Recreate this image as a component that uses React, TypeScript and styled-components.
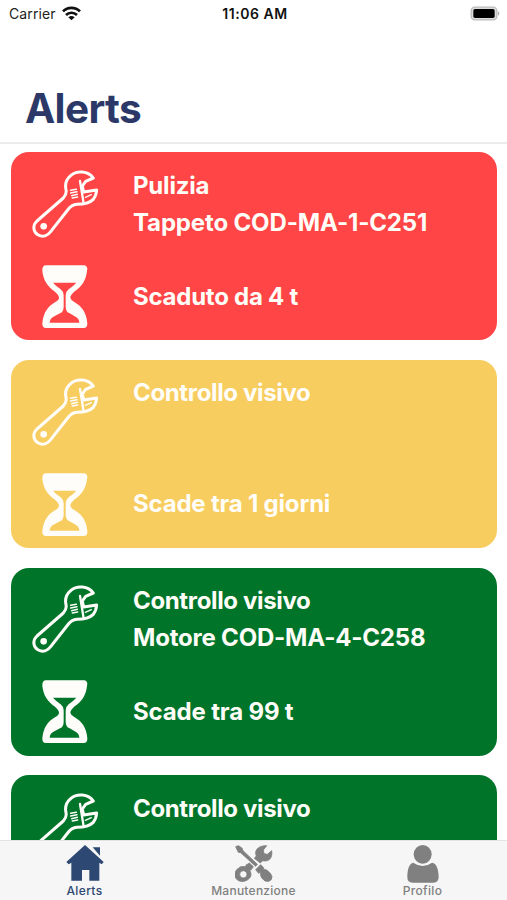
import React from "react";
import styled, { createGlobalStyle } from "styled-components";

const GlobalStyle = createGlobalStyle`
  * { box-sizing: border-box; }
  body { margin: 0; background: #fff; font-family: Inter, "Liberation Sans", sans-serif; }
`;

const Screen = styled.div`
  width: 507px;
  height: 900px;
  display: flex;
  flex-direction: column;
  overflow: hidden;
  background: #fff;
`;

const StatusBar = styled.div`
  height: 27px;
  flex: none;
  display: grid;
  grid-template-columns: 1fr auto 1fr;
  align-items: center;
  padding: 0 6px 0 9px;
  font-size: 14px;
  color: #222;
`;

const Carrier = styled.div`
  display: flex;
  align-items: center;
  gap: 6px;
  letter-spacing: 0.1px;
`;

const Clock = styled.div`
  font-weight: 600;
  letter-spacing: 0.55px;
  color: #111;
`;

const BatterySlot = styled.div`
  display: flex;
  justify-content: flex-end;
`;

const Header = styled.header`
  height: 117px;
  flex: none;
  display: flex;
  align-items: flex-end;
  padding: 0 25px 9px;
  border-bottom: 2px solid #ebebeb;
`;

const Title = styled.h1`
  margin: 0;
  font-size: 40.5px;
  line-height: 48px;
  font-weight: 700;
  letter-spacing: -0.65px;
  color: #2c3968;
`;

const List = styled.main`
  flex: 1;
  min-height: 0;
  overflow: hidden;
  display: flex;
  flex-direction: column;
  gap: 19.7px;
  padding: 8.4px 10px 0 11px;
`;

const Card = styled.article<{ $color: string }>`
  height: 188px;
  flex: none;
  border-radius: 18px;
  background: ${(p) => p.$color};
  color: #fffdf8;
  padding: 14.4px 0 0 20px;
  display: grid;
  grid-template-columns: 102px 1fr;
  grid-template-rows: 97px 64px;
`;

const IconSlot = styled.div<{ $inset: number; $top: number }>`
  padding: ${(p) => p.$top}px 0 0 ${(p) => p.$inset}px;
  svg { display: block; }
`;

const Details = styled.div<{ $top: number }>`
  padding-top: ${(p) => p.$top}px;
  font-size: 24px;
  line-height: 37px;
  font-weight: 650;
  white-space: nowrap;
`;

const Line = styled.div<{ $tracking: number }>`
  letter-spacing: ${(p) => p.$tracking}px;
`;

const TabBar = styled.nav`
  height: 60px;
  flex: none;
  display: grid;
  grid-template-columns: repeat(3, 1fr);
  border-top: 1px solid #e4e4e4;
  background: #f6f6f6;
`;

const Tab = styled.div<{ $active?: boolean }>`
  display: grid;
  grid-template-rows: 38px 14px;
  justify-items: center;
  align-content: start;
  padding-top: 4px;
  color: ${(p) => (p.$active ? "#2d4872" : "#808080")};
  svg { display: block; }
`;

const TabLabel = styled.span<{ $tracking: number }>`
  margin-top: 1px;
  font-size: 12px;
  line-height: 14px;
  font-weight: 500;
  letter-spacing: ${(p) => p.$tracking}px;
`;

const WifiIcon = () => (
  <svg width="19" height="15" viewBox="0 0 57 45" fill="none" stroke="#111" strokeWidth="8">
    <path d="M3 16 C17 2 40 2 54 16" />
    <path d="M12 27 C21 18 36 18 45 27" />
    <path d="M19 34 Q28.500 26 38 34 L28.500 43Z" fill="#111" stroke="none" />
  </svg>
);

const BatteryIcon = () => (
  <svg width="31" height="15" viewBox="0 0 93 45">
    <rect x="3.500" y="3.500" width="77" height="38" rx="11" fill="#ddd" stroke="#bbb" strokeWidth="4" />
    <rect x="10" y="9" width="64" height="27" rx="5" fill="#000" />
    <path d="M84 16 Q92 22 84 29Z" fill="#aaa" />
  </svg>
);

const WrenchIcon = () => (
  <svg width="68" height="68" viewBox="36 30 204 204" fill="none" stroke="#fffdfa" strokeWidth="9" strokeLinejoin="round" strokeLinecap="round">
    <path d="M220 54 C205 33 171 30 152 47 C139 58 134 72 138 89 C140 99 137 107 130 114 L51 183 C37 196 39 216 55 225 C69 233 83 227 92 215 L143 150 C151 139 159 134 171 133 C193 133 209 129 219 119 C226 111 229 102 230 90 L191 96 L187 78 L197 64 Z" />
    <path d="M180 63 L191 130" strokeWidth="7" />
    <path d="M196 112 L214 104" strokeWidth="4" />
    <path d="M152 91 L169 88 M152 99 L171 95 M155 107 L172 103 M157 114 L173 111" strokeWidth="4.500" />
    <circle cx="71" cy="199" r="10" fill="#fffdfa" stroke="none" />
  </svg>
);

const HourglassIcon = () => (
  <svg width="46" height="64" viewBox="36 29 138 192">
    <path
      fill="#fffdfa"
      fillRule="evenodd"
      d="M48 30 H161 C170 30 174 38 171 47 C168 75 155 94 134 108 Q121 120 121 127 Q122 134 134 141 C156 154 169 171 172 204 Q173 218 161 218 H48 Q36 218 37 204 C40 173 53 153 75 141 Q87 134 87 127 Q87 119 75 109 C52 94 40 74 37 47 Q36 30 48 30Z M69 82 Q79 93 92 102 Q101 109 101 120 V154 Q101 169 90 174 L69 185 Q60 190 59 202 H148 Q147 190 138 185 L119 174 Q107 169 107 154 V120 Q107 109 116 102 Q129 93 139 82Z"
    />
  </svg>
);

const HomeIcon = () => (
  <svg width="38" height="36" viewBox="197 45 114 108" fill="currentColor">
    <path d="M277 52 H299 V77Z" />
    <path d="M254 45 L310 96 L304 103 L297 98 V152 H267 V120 H245 V152 H213 V98 L205 103 L198 96Z" />
  </svg>
);

const ToolsIcon = () => (
  <svg width="38" height="37" viewBox="194 44 114 111" fill="currentColor" stroke="currentColor" strokeWidth="2.500" strokeLinejoin="round">
    <path d="M228 103 L240 114 L238 120 Q249 137 231 149 Q213 159 199 147 Q188 133 199 118 Q211 105 225 109Z M219 121 A11 11 0 1 0 219 143 A11 11 0 1 0 219 121Z" fillRule="evenodd" />
    <path d="M228 104 L237 98 L249 109 L241 120Z" />
    <path d="M252 84 L258 77 C250 59 266 45 289 46 L279 59 L281 70 L291 72 L304 61 C307 81 298 96 277 91 L270 98Z" />
    <path d="M196 49 L204 46 L215 53 L218 61 L261 102 L256 108 L211 67 L204 66Z" />
    <path d="M256 118 L271 103 L280 112 L279 117 C289 115 303 130 305 139 Q305 150 295 153 Q284 156 274 143 Q268 132 272 124 L265 129Z" />
  </svg>
);

const ProfileIcon = () => (
  <svg width="32" height="38" viewBox="197 43 96 114" fill="currentColor">
    <ellipse cx="244" cy="71" rx="27" ry="28" />
    <path d="M216 96 Q244 116 272 96 C287 98 292 119 292 139 Q292 156 276 156 H214 Q198 156 198 140 C198 117 203 98 216 96Z" />
  </svg>
);

type Alert = {
  color: string;
  title: string;
  asset?: string;
  due: string;
  tracking: [number, number, number];
};

const alerts: Alert[] = [
  { color: "#ff4545", title: "Pulizia", asset: "Tappeto COD-MA-1-C251", due: "Scaduto da 4 t", tracking: [-0.2, -0.15, -0.25] },
  { color: "#f7cd60", title: "Controllo visivo", due: "Scade tra 1 giorni", tracking: [-0.35, 0, -0.2] },
  { color: "#00752a", title: "Controllo visivo", asset: "Motore COD-MA-4-C258", due: "Scade tra 99 t", tracking: [-0.35, -0.2, -0.15] },
  { color: "#00752a", title: "Controllo visivo", due: "", tracking: [-0.35, 0, 0] },
];

const AlertCard = ({ color, title, asset, due, tracking }: Alert) => (
  <Card $color={color}>
    <IconSlot $inset={1} $top={3.1}><WrenchIcon /></IconSlot>
    <Details $top={0}>
      <Line $tracking={tracking[0]}>{title}</Line>
      {asset && <Line $tracking={tracking[1]}>{asset}</Line>}
    </Details>
    <IconSlot $inset={11} $top={1.2}><HourglassIcon /></IconSlot>
    <Details $top={14}><Line $tracking={tracking[2]}>{due}</Line></Details>
  </Card>
);

export default function App() {
  return (
    <>
      <GlobalStyle />
      <Screen>
        <StatusBar>
          <Carrier>Carrier <WifiIcon /></Carrier>
          <Clock>11:06 AM</Clock>
          <BatterySlot><BatteryIcon /></BatterySlot>
        </StatusBar>
        <Header><Title>Alerts</Title></Header>
        <List>{alerts.map((alert, i) => <AlertCard key={i} {...alert} />)}</List>
        <TabBar>
          <Tab $active><HomeIcon /><TabLabel $tracking={0.35}>Alerts</TabLabel></Tab>
          <Tab><ToolsIcon /><TabLabel $tracking={0.25}>Manutenzione</TabLabel></Tab>
          <Tab><ProfileIcon /><TabLabel $tracking={0.35}>Profilo</TabLabel></Tab>
        </TabBar>
      </Screen>
    </>
  );
}
